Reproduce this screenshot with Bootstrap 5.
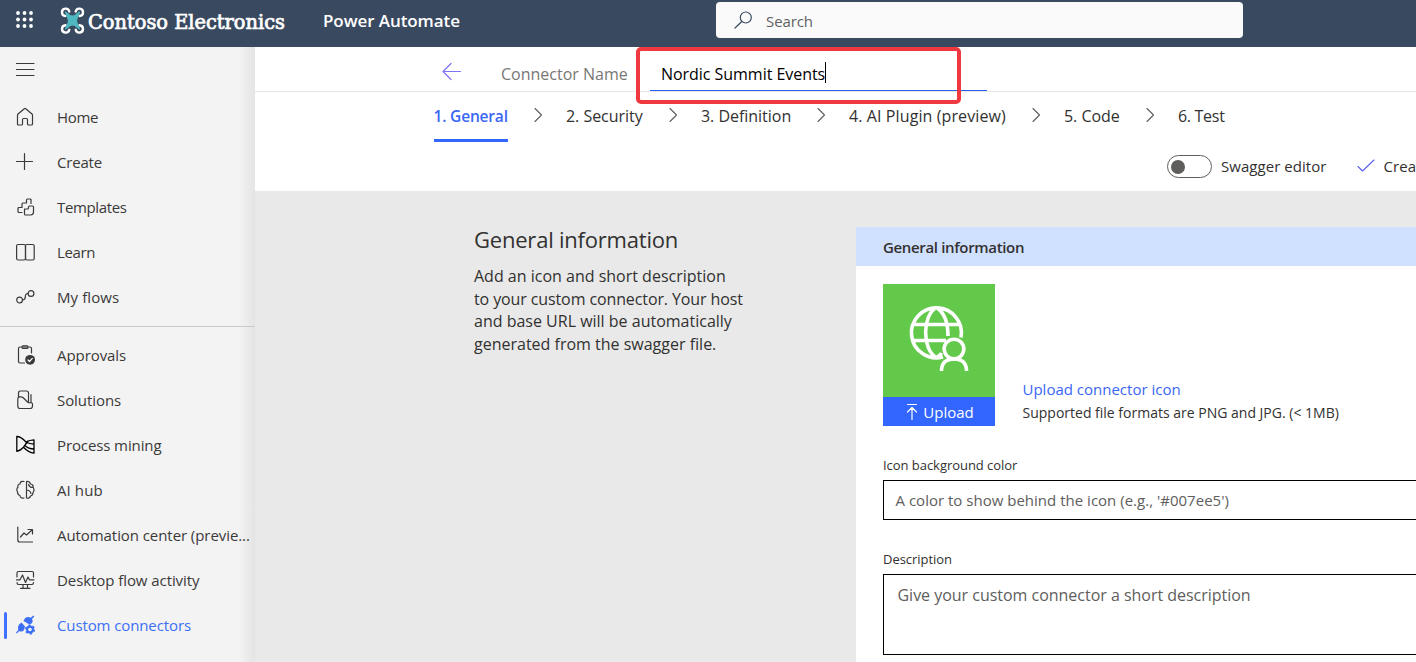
<!DOCTYPE html>
<html lang="en">
<head>
<meta charset="utf-8">
<meta name="viewport" content="width=device-width, initial-scale=1">
<title>Power Automate</title>
<link rel="stylesheet" href="https://cdn.jsdelivr.net/npm/bootstrap@5.3.0/dist/css/bootstrap.min.css">
<style>
  body { font-family: "Open Sans", "Noto Sans", sans-serif; font-size: 15px; line-height: 20px; color: #323130; background: #e9e9e9; height: 662px; overflow: hidden; }
  svg { display: block; flex: none; }
  .ln { fill: none; stroke: currentColor; stroke-width: 1.2; stroke-linecap: round; stroke-linejoin: round; }
  span, p, h1, h2, label, a { white-space: nowrap; }
  .tight { letter-spacing: -.35px; }
  .snug { letter-spacing: -.18px; }
  .loose { letter-spacing: .1px; }
  .ease { letter-spacing: -.11px; }

  .topbar { height: 47px; background: #39495f; color: #fff; flex: none; }
  .appname { width: 172px; padding: 11px 0 0 35px; font-size: 17px; letter-spacing: -.08px; }
  .searchbox { width: 527px; height: 36px; margin: 2px 0 0 256px; background: #fafafa; border-radius: 4px; color: #616161; }
  .searchbox svg { margin-left: 17px; color: #39495f; }
  .searchbox span { margin-left: 13px; padding-top: 2px; letter-spacing: -.1px; }

  .side { width: 255px; flex: none; background: linear-gradient(90deg, #f3f3f3 239px, #e4e4e4 255px); color: #3b3a39; letter-spacing: -.07px; }
  .side .burger { height: 47px; padding: 14px 0 0 16px; }
  .side .nav-link { height: 45px; padding: 0 0 0 16px; color: inherit; gap: 22px; position: relative; }
  .side .nav-link.active { color: #3c6ff5; }
  .side .nav-link.active::before { content: ""; position: absolute; left: 4px; top: 10px; width: 3px; height: 27px; background: #4070ff; border-radius: 2px; }
  .side hr { margin: 7px 0 5px; border: 0; border-top: 1px solid #c8c8c8; opacity: 1; }
  .side hr + .nav svg { margin-top: 1px; }

  .main { background: #e9e9e9; min-width: 0; overflow: hidden; }
  .namebar { height: 45px; border-bottom: 1px solid #e6e6e6; padding-left: 187px; background: #fff; font-size: 16px; position: relative; }
  .namebar svg { color: #7d74f7; margin-top: 5px; }
  .namelabel { width: 127px; margin-left: 39px; padding-top: 9px; color: #797775; }
  .field { width: 337px; height: 34px; margin-left: 22px; padding: 0 11px; border-bottom: 1px solid #2b62f5; color: #000; align-self: flex-end; }
  .field span { letter-spacing: -.04px; }
  .caret { width: 1px; height: 21px; background: #000; margin-bottom: 2px; }
  .callout-frame { position: absolute; left: 381px; top: 0; width: 325px; height: 57px; border: 4px solid #f0393e; border-radius: 5px; z-index: 2; }

  .steps { height: 50px; padding-left: 179px; background: #fff; font-size: 16px; }
  .steps span { height: 50px; padding-top: 14px; letter-spacing: -.03px; }
  .steps .cur { width: 74px; color: #3a67f5; font-size: 15.5px; font-weight: 600; letter-spacing: -.18px; border-bottom: 3px solid #3366ff; text-indent: -.5px; }
  .steps .w2 { width: 77px; }
  .steps .w3 { width: 90px; }
  .steps .w4 { width: 157px; letter-spacing: .1px; }
  .steps .w5 { width: 56px; }
  .steps .w6 { width: 47px; letter-spacing: -.3px; }
  .steps svg { margin: 14px .5px 0; width: 57px; color: #605e5c; stroke-width: 1.1; }

  .tools { height: 49px; background: #fff; padding-left: 912px; }
  .tgl { width: 45px; height: 23px; border: 1.2px solid #605e5c; border-radius: 12px; padding-left: 3px; flex: none; }
  .tgl i { width: 14px; height: 14px; border-radius: 50%; background: #5f5e5c; }
  .tools span { padding-bottom: 2px; letter-spacing: .05px; }
  .tgl + span { width: 106px; margin: 0 29.5px 0 9px; flex: none; }
  .tools svg { color: #5b5ff0; margin: -1px 9px 0 0; stroke-width: 1.1; }

  .about { width: 382px; margin-left: 219px; padding-top: 34px; flex: none; }
  .about h1 { font-size: 22px; line-height: 28px; font-weight: 400; letter-spacing: -.21px; margin: 0 0 12px; }
  .about p { font-size: 16px; line-height: 22.7px; margin: 0; }
  .pane { width: 640px; height: 436px; margin-top: 36px; flex: none; background: #fff; overflow: hidden; }
  .pane h2 { height: 39px; margin: 0; padding: 10px 0 0 27px; background: #d0e0ff; font-size: 15px; line-height: 20px; font-weight: 600; letter-spacing: -.34px; }
  .pane .inner { padding: 18px 0 0 27px; }
  .tile { width: 112px; }
  .tile .pic { height: 113px; background: #62c94a; }
  .tile .up { height: 29px; background: #3366ff; color: #fff; padding-left: 1px; }
  .hint { margin-left: 27.5px; padding-top: 95px; }
  .hint a { color: #3a67f5; text-decoration: none; }
  .hint div { font-size: 14px; margin-top: 4px; }
  .lbl { font-size: 13px; line-height: 18px; letter-spacing: -.04px; margin: 29px 0 6px; padding-top: 1px; }
  .box { border: 1px solid #000; background: #fff; width: 613px; color: #605e5c; }
  .box.one { height: 40px; padding: 9px 11.5px; letter-spacing: .01px; }
  .box.many { height: 81px; padding: 10px 13.5px; font-size: 16px; letter-spacing: -.02px; }
</style>
</head>
<body class="d-flex flex-column">
<header class="topbar d-flex align-items-start">
  <svg width="60" height="47" viewBox="0 0 60 47" fill="#fff"><circle cx="18" cy="13" r="1.900"/><circle cx="24.500" cy="13" r="1.900"/><circle cx="31" cy="13" r="1.900"/><circle cx="18" cy="19.500" r="1.900"/><circle cx="24.500" cy="19.500" r="1.900"/><circle cx="31" cy="19.500" r="1.900"/><circle cx="18" cy="26" r="1.900"/><circle cx="24.500" cy="26" r="1.900"/><circle cx="31" cy="26" r="1.900"/></svg>
  <svg width="228" height="47" viewBox="60 0 228 47">
    <path d="M65.500 16A3.700 3.700 0 1 1 69.300 11.500M75.700 11.500A3.700 3.700 0 1 1 79.500 16M65.500 25.200A3.700 3.700 0 1 0 69.300 29.800M75.700 29.800A3.700 3.700 0 1 0 79.500 25.200" fill="none" stroke="#fff" stroke-width="2.400" stroke-linecap="round"/>
    <path d="M65.500 12L70 15.500Q72.500 16.500 75 15.500L79.500 12L77.500 17Q75.500 20.600 77.500 24.200L79.500 29L75 25.500Q72.500 24.500 70 25.500L65.500 29L67.500 24.200Q69.500 20.600 67.500 17Z" fill="#4fb8c0" stroke="#4fb8c0" stroke-width="1.200" stroke-linejoin="round"/>
    <text x="88" y="29.300" textLength="197" lengthAdjust="spacingAndGlyphs" font-family="'DejaVu Serif Condensed','DejaVu Serif',serif" font-size="21" fill="#fff" stroke="#fff" stroke-width=".7">Contoso Electronics</text>
  </svg>
  <span class="appname fw-semibold">Power Automate</span>
  <div class="searchbox d-flex align-items-center">
    <svg width="20" height="20" viewBox="0 0 20 20" class="ln"><circle cx="12.800" cy="7.500" r="5.500"/><path d="M8.800 11.500L2 18"/></svg>
    <span>Search</span>
  </div>
</header>
<div class="d-flex flex-grow-1">
  <nav class="side">
    <div class="burger"><svg width="19" height="18" viewBox="0 0 19 18" class="ln"><path d="M.5 2.500H18M.5 8.500H18M.5 14.500H18"/></svg></div>
    <div class="nav flex-column flex-nowrap">
      <a class="nav-link d-flex align-items-center"><svg width="19" height="20" viewBox="0 0 19 20" class="ln"><path d="M1.500 8.200Q1.500 7.500 2 7L8.300 1.700Q9 1.200 9.700 1.700L16 7Q16.500 7.500 16.500 8.200V17Q16.500 18 15.500 18H12.500Q11.500 18 11.500 17V12.500Q11.500 11.500 10.500 11.500H7.500Q6.500 11.500 6.500 12.500V17Q6.500 18 5.500 18H2.500Q1.500 18 1.500 17Z"/></svg><span class="tight">Home</span></a>
      <a class="nav-link d-flex align-items-center"><svg width="19" height="20" viewBox="0 0 19 20" class="ln"><path d="M8.500 1.500V17.500M.5 9.500H16.500"/></svg><span class="snug">Create</span></a>
      <a class="nav-link d-flex align-items-center"><svg width="19" height="20" viewBox="0 0 19 20" class="ln"><path d="M15 6.500V3Q15 2 14 2H11.500Q10.500 2 10.500 3V6H7Q6 6 6 7V10.500H3Q2 10.500 2 11.500V14.500Q2 15.500 3 15.500H6"/><path d="M8.500 12H11.500Q12.500 12 12.500 11V10Q12.500 9 13.500 9H16.500Q17.500 9 17.500 10V15Q17.500 18 14.500 18H9.500Q8.500 18 8.500 17Z"/></svg><span class="tight">Templates</span></a>
      <a class="nav-link d-flex align-items-center"><svg width="19" height="20" viewBox="0 0 19 20" class="ln"><rect x=".6" y="2.500" width="8.900" height="15.500" rx="1.500"/><rect x="9.500" y="2.500" width="8.700" height="15.500" rx="1.500"/></svg><span class="tight">Learn</span></a>
      <a class="nav-link d-flex align-items-center"><svg width="19" height="20" viewBox="0 0 19 20" class="ln"><circle cx="3.600" cy="13" r="2.900"/><circle cx="15" cy="6.500" r="2.900"/><path d="M6.500 13Q9.300 13 9.300 9.800Q9.300 6.500 12 6.500"/></svg><span class="loose">My flows</span></a>
    </div>
    <hr>
    <div class="nav flex-column flex-nowrap">
      <a class="nav-link d-flex align-items-center"><svg width="19" height="20" viewBox="0 0 19 20" class="ln"><path d="M5.500 2H4Q2.500 2 2.500 3.500V16.500Q2.500 18 4 18H8.500M12.500 2H14Q15.500 2 15.500 3.500V8"/><rect x="6" y=".8" width="6" height="2.600" rx="1" fill="#999"/><circle cx="14.100" cy="14.800" r="4.900" fill="currentColor" stroke="none"/><path d="M12 15L13.500 16.500L16.300 13.400" stroke="#fff"/></svg><span>Approvals</span></a>
      <a class="nav-link d-flex align-items-center"><svg width="19" height="20" viewBox="0 0 19 20" class="ln"><path d="M2.500 7V3Q2.500 1 4.500 1H10.500Q12.500 1 12.500 3V12.500M15 4.500V12.500Q13 13.200 11.500 12L7 7.500Q6 6.800 4.500 6.800H3.500Q1.800 7 1.800 9V16Q1.800 18.500 4 18.500H14Q16.500 18.500 16.500 16V14Q16.500 13 15 12.500"/></svg><span>Solutions</span></a>
      <a class="nav-link d-flex align-items-center"><svg width="19" height="20" viewBox="0 0 19 20" class="ln text-black"><path stroke-width="1.300" d="M.8 1.500Q5 1.500 10 7Q13.500 5 18 4.800V18.200Q12.500 17.500 7.500 12.200M.8 1.500V16.300Q4.500 15.500 7.500 12.200Q9.500 9.500 12 6M10 7Q13.500 9 18 9.200M8.800 10.500Q12.500 14 18 14"/></svg><span class="ease">Process mining</span></a>
      <a class="nav-link d-flex align-items-center"><svg width="19" height="20" viewBox="0 0 19 20" class="ln"><path d="M8 1.500Q4.500 .5 4 4Q1.500 4 2 7Q0 9 1.500 12Q1.500 15 4 15.500Q4.500 18.800 8 18M10.500 1.500V18Q13.500 19 14.500 16Q17 15.500 17 12.500Q19 10 17 7Q17.500 4.500 14.500 4Q13.500 1 10.500 1.500M12.500 4.500Q13.500 7.500 16.500 7.500M10.500 10Q14 10 15 13.500"/></svg><span class="loose">AI hub</span></a>
      <a class="nav-link d-flex align-items-center"><svg width="19" height="20" viewBox="0 0 19 20" class="ln"><path d="M1.800 2V15Q1.800 17 3.800 17H16.500M4.500 12L8 8L10.500 10L16 5M12 4.500H16.500V9"/></svg><span>Automation center (previe...</span></a>
      <a class="nav-link d-flex align-items-center"><svg width="19" height="20" viewBox="0 0 19 20" class="ln"><path d="M1 7V3Q1 1.500 2.500 1.500H16Q17.500 1.500 17.500 3V7M1 12.500Q1 14.500 2.500 14.500H16Q17.500 14.500 17.500 12.500M.5 9.800H4L6.500 5L9.500 12.500L12 7L13.500 9.800H18M7 14.500V18M11.500 14.500V18M4.500 18.300H14"/></svg><span>Desktop flow activity</span></a>
      <a class="nav-link active d-flex align-items-center"><svg width="19" height="20" viewBox="0 0 19 20" fill="currentColor"><path d="M18.300 1.500L16 4Q17.500 6.800 15.500 8.500L13.500 9.500L7.500 6Q9 2 12 2Q13.500 2 14.700 2.800L17.300.5ZM5.500 7.500L9 11.500L8 15Q6 17.500 3 16L1 18.500L0 17.500L2.200 15Q1 12.500 3 9.500Z"/><circle cx="14" cy="14.500" r="2.900" fill="none" stroke="currentColor" stroke-width="2.200"/><circle cx="14" cy="14.500" r="4.300" fill="none" stroke="currentColor" stroke-width="1.600" stroke-dasharray="2.250 2.250"/></svg><span class="ease">Custom connectors</span></a>
    </div>
  </nav>
  <main class="main flex-grow-1">
    <div class="namebar d-flex align-items-center">
      <svg width="20" height="20" viewBox="0 0 20 20" class="ln"><path d="M1 9.500H18.500M9 1.500L1 9.500L9 17.500"/></svg>
      <span class="namelabel">Connector Name</span>
      <div class="field d-flex align-items-center"><span>Nordic Summit Events</span><div class="caret"></div></div>
      <div class="callout-frame"></div>
    </div>
    <div class="steps d-flex">
      <span class="cur">1. General</span>
      <svg width="57" height="18" viewBox="0 0 57 18" class="ln"><path d="M26 2.500L32.500 9L26 15.500"/></svg>
      <span class="w2">2. Security</span>
      <svg width="57" height="18" viewBox="0 0 57 18" class="ln"><path d="M26 2.500L32.500 9L26 15.500"/></svg>
      <span class="w3">3. Definition</span>
      <svg width="57" height="18" viewBox="0 0 57 18" class="ln"><path d="M26 2.500L32.500 9L26 15.500"/></svg>
      <span class="w4">4. AI Plugin (preview)</span>
      <svg width="57" height="18" viewBox="0 0 57 18" class="ln"><path d="M26 2.500L32.500 9L26 15.500"/></svg>
      <span class="w5">5. Code</span>
      <svg width="57" height="18" viewBox="0 0 57 18" class="ln"><path d="M26 2.500L32.500 9L26 15.500"/></svg>
      <span class="w6">6. Test</span>
    </div>
    <div class="tools d-flex align-items-center">
      <div class="tgl d-flex align-items-center"><i></i></div>
      <span>Swagger editor</span>
      <svg width="18" height="18" viewBox="0 0 18 18" class="ln"><path d="M1 9.500L5.500 14L17 3"/></svg>
      <span>Create connector</span>
    </div>
    <div class="d-flex">
      <section class="about">
        <h1>General information</h1>
        <p>Add an icon and short description<br><span class="ease">to your custom connector. Your host</span><br>and base URL will be automatically<br>generated from the swagger file.</p>
      </section>
      <section class="pane">
        <h2>General information</h2>
        <div class="inner">
          <div class="d-flex">
            <div class="tile">
              <div class="pic"><svg width="112" height="113" viewBox="0 0 112 113" fill="none" stroke="#fff" stroke-width="3.600"><path d="M78 53.500A25 25 0 1 0 60 73M31 40.500H76M31 56.500H63M53.500 73.500C39 66 39 31 53.500 23.500M53.500 23.500Q65 31 65 52M53.500 73.500Q57 72 58.500 69"/><circle cx="71" cy="65" r="9.800"/><path d="M58.500 87Q58.500 75 71 75Q83.500 75 83.500 87"/></svg></div>
              <div class="up d-flex align-items-center justify-content-center gap-1"><svg width="14" height="18" viewBox="0 0 14 18" class="ln"><path d="M2.500 1.500H11.500M7 16.500V5M2.500 9L7 4.500L11.500 9"/></svg><span>Upload</span></div>
            </div>
            <div class="hint"><a href="#">Upload connector icon</a><div>Supported file formats are PNG and JPG. (&lt; 1MB)</div></div>
          </div>
          <div class="lbl">Icon background color</div>
          <div class="box one">A color to show behind the icon (e.g., '#007ee5')</div>
          <div class="lbl">Description</div>
          <div class="box many">Give your custom connector a short description</div>
        </div>
      </section>
    </div>
  </main>
</div>
<script src="https://cdn.jsdelivr.net/npm/bootstrap@5.3.0/dist/js/bootstrap.bundle.min.js"></script>
</body>
</html>
